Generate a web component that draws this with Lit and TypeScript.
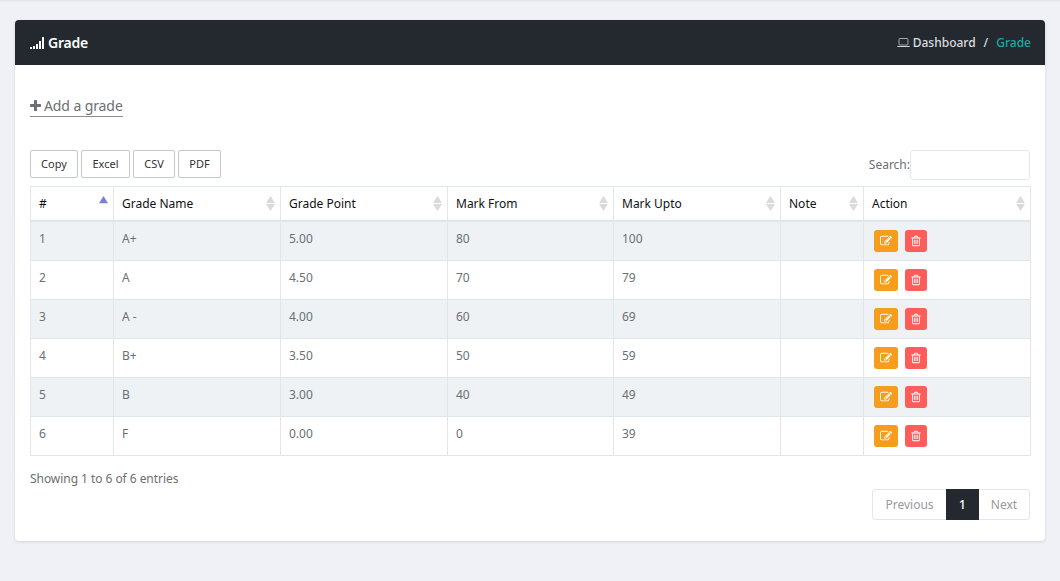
import { LitElement, html, css, svg } from "lit";
import { customElement } from "lit/decorators.js";

const PLUS = "M1600 736v192q0 40-28 68t-68 28h-416v416q0 40-28 68t-68 28h-192q-40 0-68-28t-28-68v-416h-416q-40 0-68-28t-28-68v-192q0-40 28-68t68-28h416v-416q0-40 28-68t68-28h192q40 0 68 28t28 68v416h416q40 0 68 28t28 68z";
const EDIT = "M888 1184l116-116-152-152-116 116v56h96v96h56zm440-720q-16-16-33 1l-350 350q-17 17-1 33t33-1l350-350q17-17 1-33zm80 594v190q0 119-84.5 203.5t-203.5 84.5h-832q-119 0-203.5-84.5t-84.5-203.5v-832q0-119 84.5-203.5t203.5-84.5h832q63 0 117 25 15 7 18 23 3 17-9 29l-49 49q-14 14-32 8-23-6-45-6h-832q-66 0-113 47t-47 113v832q0 66 47 113t113 47h832q66 0 113-47t47-113v-126q0-13 9-22l64-64q15-15 35-7t20 29zm-96-738l288 288-672 672h-288v-288zm444 132l-92 92-288-288 92-92q28-28 68-28t68 28l152 152q28 28 28 68t-28 68z";
const SLOT = "v576q0 14-9 23t-23 9h-64q-14 0-23-9t-9-23v-576q0-14 9-23t23-9h64q14 0 23 9t9 23z";
const TRASH = `M704 736${SLOT}M960 736${SLOT}M1216 736${SLOT}M1344 1460v-948h-896v948q0 22 7 40.5t14.5 27 10.5 8.5h832q3 0 10.5-8.5t14.5-27 7-40.5zm-672-1076h448l-48-117q-7-9-17-11h-317q-10 2-17 11zm928 32v64q0 14-9 23t-23 9h-96v948q0 83-47 143.5t-113 60.5h-832q-66 0-113-58.5t-47-141.5v-952h-96q-14 0-23-9t-9-23v-64q0-14 9-23t23-9h309l70-167q15-37 54-63t79-26h320q40 0 79 26t54 63l70 167h309q14 0 23 9t9 23z`;

const icon = (d: string, cls: string, box = "0 0 1792 1792") =>
  html`<svg class=${cls} viewBox=${box} fill="currentColor">${svg`<path d=${d} />`}</svg>`;

const COLUMNS = ["#", "Grade Name", "Grade Point", "Mark From", "Mark Upto", "Note", "Action"];
const ROWS = [
  ["1", "A+", "5.00", "80", "100", ""],
  ["2", "A", "4.50", "70", "79", ""],
  ["3", "A -", "4.00", "60", "69", ""],
  ["4", "B+", "3.50", "50", "59", ""],
  ["5", "B", "3.00", "40", "49", ""],
  ["6", "F", "0.00", "0", "39", ""],
];

@customElement("app-root")
export class AppRoot extends LitElement {
  static styles = css`
    :host {
      display: block;
      box-sizing: border-box;
      height: 581px;
      padding: 20px 15px 0;
      background: linear-gradient(#e3e4ea 0, #eaebf0 1px, #f0f1f7 3px, #f0f1f7 100%);
      font-family: "Noto Sans", sans-serif;
      font-size: 12px;
      line-height: 18px;
      color: #6c6f73;
    }
    * { box-sizing: border-box; }
    .card {
      height: 521px;
      background: #fff;
      border-radius: 4px;
      box-shadow: 0 1px 3px rgba(0, 0, 0, 0.13);
      overflow: hidden;
    }
    .head {
      height: 45px;
      padding: 0 14px 0 15px;
      background: #242930;
      color: #fff;
      display: flex;
      align-items: center;
      justify-content: space-between;
    }
    .title { display: flex; align-items: center; gap: 4px; margin: 0; font-size: 14px; font-weight: 600; letter-spacing: -0.2px; }
    .signal { width: 14px; height: 12px; }
    .crumbs { display: flex; align-items: center; color: #dcdddf; font-weight: 500; }
    .laptop { width: 13px; height: 9px; margin-right: 3px; }
    .slash { margin: 0 8px; }
    .here { color: #16aca5; }
    .body { padding: 30px 15px 0; }
    .add {
      display: inline-flex;
      align-items: center;
      gap: 3px;
      height: 22px;
      border-bottom: 1px solid #8b8e92;
      font-size: 14px;
      letter-spacing: -0.1px;
    }
    .plus { width: 11px; height: 11px; }
    .tools { display: flex; justify-content: space-between; margin-top: 33px; height: 36px; }
    .exports { display: flex; gap: 3px; }
    .export {
      height: 28px;
      padding: 0;
      border: 1px solid #c8c8c8;
      border-radius: 2px;
      background: #fff;
      color: #333;
      font: 11px/26px "Noto Sans", sans-serif;
    }
    .copy { width: 48px; }
    .excel { width: 49px; }
    .csv { width: 42px; }
    .pdf { width: 43px; }
    .search { display: flex; height: 30px; line-height: 29px; }
    .field { width: 120px; height: 30px; border: 1px solid #e4e8ec; border-radius: 3px; outline: none; }
    .grid { width: 1001px; table-layout: fixed; border-collapse: separate; border-spacing: 0; }
    .w83 { width: 83px; }
    .w166 { width: 166px; }
    .w167 { width: 167px; }
    .w168 { width: 168px; }
    th, td { text-align: left; font-weight: 400; border-left: 1px solid #e1e6ea; padding: 0 8px; }
    th:last-child, td:last-child { border-right: 1px solid #e1e6ea; }
    th {
      height: 36px;
      border-top: 1px solid #e1e6ea;
      border-bottom: 2px solid #e1e6ea;
      color: #101214;
    }
    td { height: 39px; border-bottom: 1px solid #e1e6ea; vertical-align: top; padding-top: 8px; }
    tbody tr:nth-child(odd) td { background: #eef2f5; }
    .label { display: flex; justify-content: space-between; align-items: center; }
    .sort { width: 9px; height: 15px; margin-right: -3px; margin-left: auto; margin-top: -1px; }
    td.acts { padding: 7.5px 10px 0; }
    .pair { display: flex; gap: 7px; }
    .btn {
      display: flex;
      align-items: center;
      justify-content: center;
      height: 22px;
      border-radius: 3px;
      color: #fff;
    }
    .edit { width: 24px; background: #f69d1d; }
    .del { width: 22px; background: #ff5d5a; }
    .glyph { width: 12px; height: 12px; }
    .info { margin-top: 14px; letter-spacing: -0.05px; }
    .pages { display: flex; justify-content: flex-end; margin-top: 1px; line-height: 29px; text-align: center; color: #97999c; }
    .page { height: 31px; border: 1px solid #e4e7ea; }
    .prev { width: 74px; border-right: 0; border-radius: 4px 0 0 4px; }
    .current { width: 33px; background: #242930; border-color: #242930; color: #fff; font-weight: 500; }
    .next { width: 51px; border-left: 0; border-radius: 0 4px 4px 0; }
  `;

  private sortIcon(first: boolean) {
    return html`<svg class="sort" viewBox="0 0 9 15">
      ${first
        ? svg`<path d="M4.5 0L9 7.2H0z" fill="#7b80dd" />`
        : svg`<path d="M4.5 0L9 7H0zM0 8H9L4.5 15z" fill="#dadada" />`}
    </svg>`;
  }

  render() {
    return html`
      <section class="card">
        <header class="head">
          <h1 class="title">
            <svg class="signal" viewBox="0 0 14 12" fill="#fff">
              <path d="M0 10h2v2H0zM3 9h2v3H3zM6 7h2v5H6zM9 4h2v8H9zM12 0h2v12h-2z" />
            </svg>
            <span>Grade</span>
          </h1>
          <nav class="crumbs">
            <svg class="laptop" viewBox="0 0 13 9">
              <rect x="2" y=".5" width="9" height="6.5" rx="1" fill="none" stroke="#a4a6a9" />
              <path d="M0 8h13q0 1-1 1H1q-1 0-1-1z" fill="#d0d1d3" />
            </svg>
            <span>Dashboard</span><span class="slash">/</span><span class="here">Grade</span>
          </nav>
        </header>
        <div class="body">
          <a class="add">${icon(PLUS, "plus", "192 128 1408 1408")}<span>Add a grade</span></a>
          <div class="tools">
            <div class="exports">
              ${["Copy", "Excel", "CSV", "PDF"].map(
                (t) => html`<button class="export ${t.toLowerCase()}">${t}</button>`
              )}
            </div>
            <label class="search">Search:<input class="field" /></label>
          </div>
          <table class="grid">
            <colgroup>
              <col class="w83" /><col class="w167" /><col class="w167" /><col class="w166" />
              <col class="w167" /><col class="w83" /><col class="w168" />
            </colgroup>
            <thead>
              <tr>
                ${COLUMNS.map(
                  (c, i) => html`<th><div class="label"><span>${c}</span>${this.sortIcon(i === 0)}</div></th>`
                )}
              </tr>
            </thead>
            <tbody>
              ${ROWS.map(
                (r) => html`<tr>
                  ${r.map((v) => html`<td>${v}</td>`)}
                  <td class="acts">
                    <div class="pair">
                      <a class="btn edit">${icon(EDIT, "glyph")}</a>
                      <a class="btn del">${icon(TRASH, "glyph")}</a>
                    </div>
                  </td>
                </tr>`
              )}
            </tbody>
          </table>
          <div class="info">Showing 1 to 6 of 6 entries</div>
          <div class="pages">
            <span class="page prev">Previous</span><span class="page current">1</span><span class="page next">Next</span>
          </div>
        </div>
      </section>
    `;
  }
}
